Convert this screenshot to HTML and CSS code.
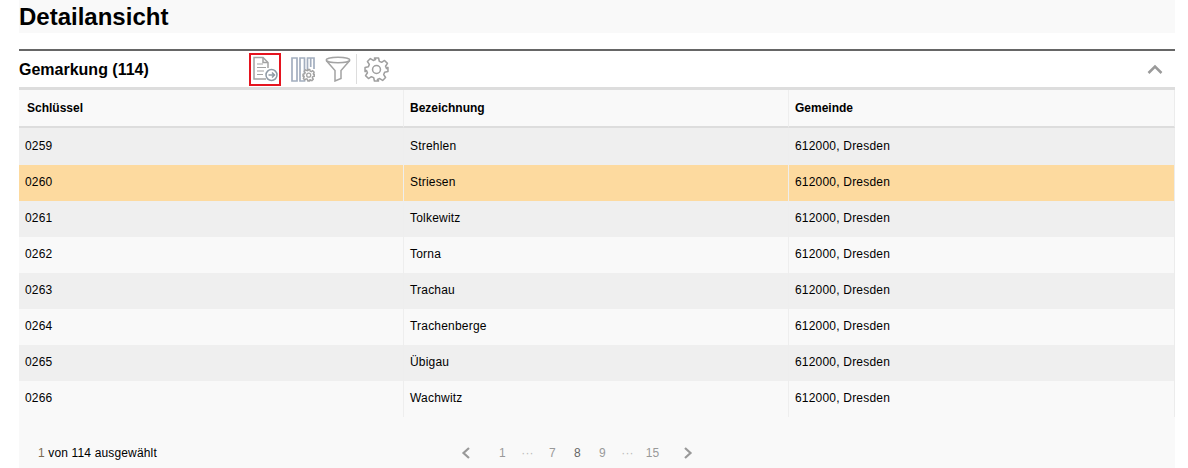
FILE: index.html
```html
<html lang="de"><head>
    <meta charset="UTF-8">
    <meta name="viewport" content="width=device-width, initial-scale=1.0">
    <title>Detailansicht</title>
    <link rel="stylesheet" href="styles.css">
</head>
<body>
    <div class="page">
        <h1 class="page-title">Detailansicht</h1>

        <section class="panel">
            <div class="panel-head">
                <h2>Gemarkung (114)</h2>
                <div class="tools">
                    <button class="tool tool-active" type="button">
                        <svg width="28" height="28" viewBox="0 0 28 28" fill="none" stroke="#a3a3a3" stroke-width="1.500">
                            <path d="M15 24H3V2.500H12L17 7.500V13"/>
                            <path d="M12 2.500V7.500H17"/>
                            <path d="M6 9h6M6 12.500h9M6 16h7M6 19.500h6" stroke-width="1.200"/>
                            <circle cx="20.500" cy="20" r="5.500" fill="#fff" stroke="#8f9aa5" stroke-width="1.500"/>
                            <path d="M17.500 20h6M21 17.500l2.500 2.500-2.500 2.500" stroke="#8f9aa5" stroke-width="1.500"/>
                        </svg>
                    </button>
                    <button class="tool tool-columns" type="button">
                        <svg width="24" height="25" viewBox="0 0 24 25" fill="none" stroke="#a3aebf" stroke-width="1.700">
                            <path d="M1 1h5v23H1zM9 1h4.500v23H9z"/>
                            <path d="M16.500 12V1h6.500v11M19.700 1v9"/>
                            <path transform="translate(11.500 12) scale(.52)" fill="#fff" stroke="#a3a3a3" stroke-width="2.800" stroke-linejoin="round" d="M10 1h4l.7 3.200 2.200.9 2.800-1.800 2.800 2.800-1.800 2.800.9 2.200L23 10v4l-3.200.7-.9 2.200 1.800 2.800-2.800 2.800-2.800-1.800-2.200.9L14 23h-4l-.7-3.200-2.200-.9-2.800 1.800-2.800-2.800 1.800-2.800-.9-2.200L1 14v-4l3.200-.7.9-2.200-1.800-2.800 2.800-2.800 2.800 1.800 2.200-.9z"/>
                            <circle cx="17.700" cy="18.200" r="2" stroke="#a3a3a3" stroke-width="1.300"/>
                        </svg>
                    </button>
                    <button class="tool tool-filter" type="button">
                        <svg width="26" height="26" viewBox="0 0 26 26" fill="none" stroke="#a3a3a3" stroke-width="1.500">
                            <ellipse cx="13" cy="4" rx="11.800" ry="2.800"/>
                            <path d="M1.200 4.500L10 14.500V25l6-2.500v-8L24.800 4.500"/>
                        </svg>
                    </button>
                    <span class="tool-sep"></span>
                    <button class="tool tool-gear" type="button">
                        <svg width="25" height="25" viewBox="0 0 24 24" fill="none" stroke="#a0a0a0" stroke-width="1.500">
                            <circle cx="12" cy="12" r="3.800"/>
                            <path d="M10 1h4l.7 3.200 2.200.9 2.800-1.800 2.800 2.800-1.800 2.800.9 2.200L23 10v4l-3.200.7-.9 2.200 1.800 2.800-2.800 2.800-2.800-1.800-2.200.9L14 23h-4l-.7-3.200-2.200-.9-2.800 1.800-2.800-2.800 1.800-2.800-.9-2.200L1 14v-4l3.200-.7.9-2.200-1.800-2.800 2.800-2.800 2.800 1.800 2.200-.9z" stroke-linejoin="round"/>
                        </svg>
                    </button>
                </div>
                <svg class="collapse" width="16" height="10" viewBox="0 0 16 10" fill="none" stroke="#9a9a9a" stroke-width="2.500">
                    <path d="M1.500 9L8 2.500 14.500 9"/>
                </svg>
            </div>

            <table class="grid">
                <thead>
                    <tr><th>Schlüssel</th><th>Bezeichnung</th><th>Gemeinde</th></tr>
                </thead>
                <tbody>
                    <tr class="row-first"><td>0259</td><td>Strehlen</td><td>612000, Dresden</td></tr>
                    <tr class="selected"><td>0260</td><td>Striesen</td><td>612000, Dresden</td></tr>
                    <tr><td>0261</td><td>Tolkewitz</td><td>612000, Dresden</td></tr>
                    <tr><td>0262</td><td>Torna</td><td>612000, Dresden</td></tr>
                    <tr><td>0263</td><td>Trachau</td><td>612000, Dresden</td></tr>
                    <tr><td>0264</td><td>Trachenberge</td><td>612000, Dresden</td></tr>
                    <tr><td>0265</td><td>Übigau</td><td>612000, Dresden</td></tr>
                    <tr><td>0266</td><td>Wachwitz</td><td>612000, Dresden</td></tr>
                </tbody>
            </table>

            <div class="grid-foot">
                <span class="count"><span class="count-num">1</span> von 114 ausgewählt</span>
                <div class="pager">
                    <svg class="pager-arrow" width="10" height="12" viewBox="0 0 10 12" fill="none" stroke="#999" stroke-width="2.200"><path d="M8 1L2.500 6 8 11"/></svg>
                    <span class="pg pg-first">1</span>
                    <span class="pg dots">···</span>
                    <span class="pg">7</span>
                    <span class="pg pg-current">8</span>
                    <span class="pg">9</span>
                    <span class="pg dots">···</span>
                    <span class="pg">15</span>
                    <svg class="pager-arrow pager-next" width="10" height="12" viewBox="0 0 10 12" fill="none" stroke="#999" stroke-width="2.200"><path d="M2 1l5.500 5L2 11"/></svg>
                </div>
            </div>
        </section>
    </div>
</body></html>
```

FILE: styles.css
```css
body {
    margin: 0;
    background: #fff;
    font-family: "Liberation Sans", Arial, sans-serif;
    color: #000;
    overflow: hidden;
}

.page {
    padding: 0 13px 0 19px;
}

.page-title {
    margin: 0 0 16px;
    height: 33px;
    line-height: 33px;
    background: #f9f9f9;
    font-size: 24px;
    font-weight: bold;
}

.panel {
    border-top: 2px solid #666;
}

.panel-head {
    display: flex;
    align-items: center;
    height: 36px;
    border-bottom: 3px solid #ddd;
}

.panel-head h2 {
    margin: 2px 0 0;
    width: 230px;
    font-size: 16px;
    font-weight: bold;
}

.tools {
    display: flex;
    align-items: center;
    flex: 1;
}

.tool {
    display: flex;
    align-items: center;
    justify-content: center;
    padding: 0;
    border: none;
    background: none;
}

.tool-active {
    width: 32px;
    height: 33px;
    border: 2px solid #e5141f;
    box-sizing: border-box;
}

.tool-columns {
    margin-left: 10px;
}

.tool-filter {
    margin-left: 10px;
}

.tool-sep {
    width: 1px;
    height: 30px;
    margin: 0 7px 0 5px;
    background: #ddd;
}

.collapse {
    margin-right: 12px;
}

.grid {
    width: 100%;
    border-collapse: separate;
    border-spacing: 0;
    table-layout: fixed;
    font-size: 12px;
}

.grid th {
    height: 38px;
    padding: 0 6px;
    background: #f9f9f9;
    border-bottom: 2px solid #ddd;
    text-align: left;
    font-weight: bold;
}

.grid th:first-child {
    padding-left: 8px;
}

.grid th:nth-child(1), .grid td:nth-child(1) {
    width: 384px;
    box-sizing: border-box;
}

.grid th:nth-child(2), .grid td:nth-child(2) {
    width: 385px;
    box-sizing: border-box;
}

.grid th + th {
    border-left: 1px solid #eee;
}

.grid th:last-child, .grid td:last-child {
    border-right: 1px solid #ececec;
}

.grid td {
    height: 36px;
    padding: 0 6px 2px;
    box-sizing: border-box;
    letter-spacing: 0.2px;
}

.grid td + td {
    border-left: 1px solid #eee;
}

.grid tbody tr:nth-child(odd) {
    background: #efefef;
}

.grid tbody tr:nth-child(even) {
    background: #f9f9f9;
}

.grid tbody tr.row-first td {
    height: 37px;
}

.grid tbody tr.selected {
    background: #fdda9f;
}

.grid-foot {
    display: flex;
    align-items: center;
    height: 51px;
    padding-top: 21px;
    box-sizing: border-box;
    background: #f9f9f9;
    font-size: 12px;
    letter-spacing: 0.15px;
}

.count {
    width: 442px;
    padding-left: 19px;
    box-sizing: border-box;
}

.count-num {
    color: #7a6a50;
}

.pager {
    display: flex;
    align-items: center;
    color: #999;
}

.pg {
    width: 25px;
    text-align: center;
}

.pg-first {
    margin-left: 19px;
}

.pg-current {
    color: #666;
}

.dots {
    color: #bbb;
}

.pager-next {
    margin-left: 18px;
}
```
